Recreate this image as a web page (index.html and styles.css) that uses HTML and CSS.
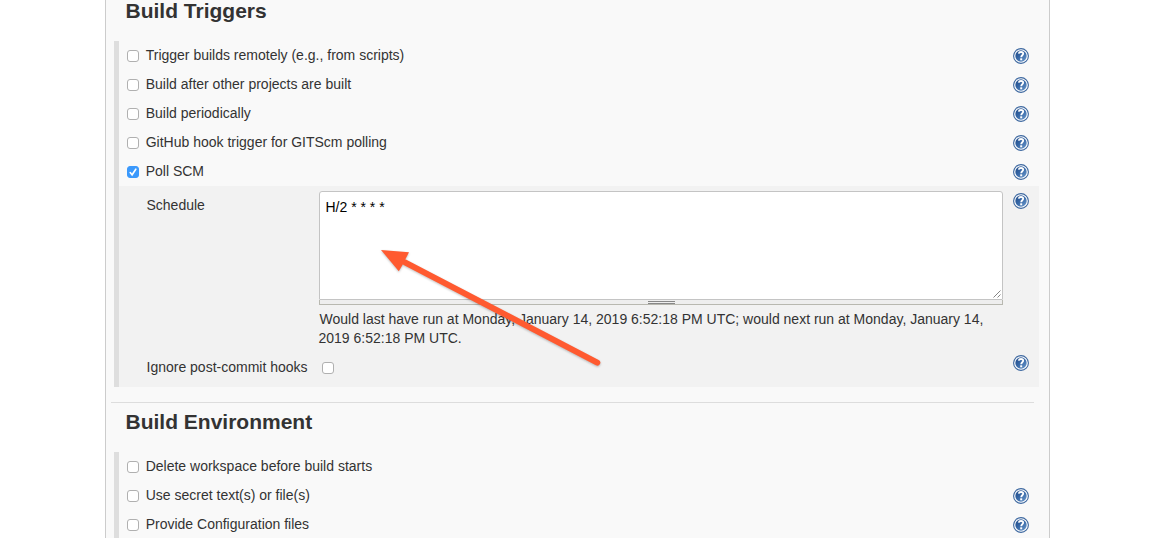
FILE: index.html
```
<!DOCTYPE html>
<html lang="en">
<head>
<meta charset="utf-8">
<title>Build Triggers</title>
<link rel="stylesheet" href="styles.css">
</head>
<body>
<svg width="0" height="0" class="defs">
  <defs>
    <linearGradient id="blue" x1="0" y1="0" x2="1" y2="1">
      <stop offset="0" stop-color="#204a87"/>
      <stop offset=".45" stop-color="#3566a5"/>
      <stop offset="1" stop-color="#6e9bcd"/>
    </linearGradient>
    <symbol id="help" viewBox="0 0 16 16">
      <circle cx="8" cy="8" r="7.4" fill="#fff" stroke="#3c679f" stroke-width="1.1"/>
      <circle cx="8" cy="8" r="5.7" fill="url(#blue)"/>
      <path d="M5.700 5.700C5.900 4.500 6.800 4 8 4c1.400 0 2.200.700 2.200 1.700 0 1.500-2 1.600-2 3.500" fill="none" stroke="#fff" stroke-width="1.800"/>
      <rect x="7.200" y="10.300" width="2" height="2" fill="#fff"/>
    </symbol>
  </defs>
</svg>
<main class="config">
  <h2 class="title">Build Triggers</h2>
  <section class="group">
    <div class="row"><span class="box"></span><label>Trigger builds remotely (e.g., from scripts)</label><svg class="help"><use href="#help"/></svg></div>
    <div class="row"><span class="box"></span><label>Build after other projects are built</label><svg class="help"><use href="#help"/></svg></div>
    <div class="row"><span class="box"></span><label>Build periodically</label><svg class="help"><use href="#help"/></svg></div>
    <div class="row"><span class="box"></span><label>GitHub hook trigger for GITScm polling</label><svg class="help"><use href="#help"/></svg></div>
    <div class="row"><span class="box checked"><svg viewBox="0 0 12 12"><path d="M3.200 6.500 5.100 8.800 8.800 3.200"/></svg></span><label>Poll SCM</label><svg class="help"><use href="#help"/></svg></div>
    <div class="nested">
      <div class="schedule">
        <div class="name">Schedule</div>
        <div class="field">
          <div class="area">H/2 * * * *<svg class="resizer" viewBox="0 0 8 8"><path d="M.5 7.5l7-7M4.500 7.500l3-3"/></svg></div>
          <div class="handle"><span class="grip"></span></div>
          <div class="message"><span class="first">Would last have run at Monday, January 14, 2019 6:52:18 PM UTC; would next run at Monday, January 14,</span><br>2019 6:52:18 PM UTC.</div>
        </div>
        <svg class="help"><use href="#help"/></svg>
      </div>
      <div class="hooks">
        <div class="name">Ignore post-commit hooks</div>
        <span class="box"></span>
        <svg class="help"><use href="#help"/></svg>
      </div>
    </div>
  </section>
  <div class="rule"></div>
  <h2 class="title second">Build Environment</h2>
  <section class="group">
    <div class="row"><span class="box"></span><label>Delete workspace before build starts</label></div>
    <div class="row"><span class="box"></span><label>Use secret text(s) or file(s)</label><svg class="help"><use href="#help"/></svg></div>
    <div class="row"><span class="box"></span><label>Provide Configuration files</label><svg class="help"><use href="#help"/></svg></div>
    <div class="row"></div>
  </section>
</main>
<svg class="arrow" viewBox="0 0 240 140"><path class="shaft" d="M25 22.300 217.300 122.700"/><path class="head" d="M1 10 29 12.300 25.500 19 22.500 25 18.800 31.200z"/></svg>
</body>
</html>
```
FILE: styles.css
```
* { box-sizing: border-box; }
html, body { height: 100%; }
body {
  margin: 0;
  overflow: hidden;
  background: #fff;
  color: #333;
  font: 14px/19px "Liberation Sans", Arial, sans-serif;
}
.defs { position: absolute; }
.config {
  width: 945px;
  height: 538px;
  margin-left: 105px;
  overflow: hidden;
  background: #f9f9f9;
  border: 1px solid #ccc;
  border-width: 0 1px;
}
.title {
  height: 41px;
  margin: 0;
  padding-left: 19.500px;
  font-size: 21px;
  line-height: 22px;
}
.second { height: 49px; padding-top: 8px; }
.group {
  width: 925px;
  margin-left: 8px;
  border-left: 5px solid #dedede;
}
.row {
  display: flex;
  align-items: center;
  height: 29px;
  padding: 0 10px 0 8px;
}
.row .box { margin-top: 1px; }
.row label { margin-left: 6.700px; }
.box {
  flex: none;
  width: 12px;
  height: 12px;
  background: #fff;
  border: 1px solid #b0b0b0;
  border-radius: 3px;
}
.checked { background: #3b99fc; border-color: #3b99fc; }
.checked svg { display: block; width: 12px; height: 12px; margin: -1px; }
.checked path { fill: none; stroke: #fff; stroke-width: 1.6; stroke-linecap: round; }
.help { flex: none; width: 16px; height: 16px; margin: 1px 0 0 auto; }
.nested { height: 201px; padding: 5px 10px 0 27.500px; background: #f2f2f2; }
.schedule { display: flex; align-items: flex-start; }
.schedule .name { width: 172.500px; padding-top: 5px; }
.schedule .help { margin-top: 2px; }
.field { width: 684px; }
.area {
  display: flex;
  justify-content: space-between;
  height: 109px;
  padding: 6px 1px 1px 5.500px;
  background: #fff;
  border: 1px solid #c4c4c4;
  border-radius: 3px 3px 1px 1px;
  color: #000;
}
.resizer { align-self: flex-end; width: 8px; height: 8px; }
.resizer path { fill: none; stroke: #666; stroke-width: .8; }
.handle {
  display: flex;
  justify-content: center;
  height: 5px;
  background: #eee;
  border: 1px solid #b8b8b0;
  border-top: 0;
}
.grip { width: 27px; height: 3px; margin-top: 1px; border: 1px solid #888; border-width: 1px 0; }
.message { margin-top: 5px; margin-left: -.5px; white-space: nowrap; }
.first { margin-left: 1px; }
.hooks { display: flex; align-items: flex-start; margin-top: 10px; }
.hooks .name { width: 175.500px; }
.hooks .box { margin-top: 4px; }
.hooks .help { margin-top: -3px; }
.rule { width: 923px; height: 1px; margin: 15px 0 0 5px; background: #ddd; }
.arrow {
  position: absolute;
  left: 380px;
  top: 240px;
  width: 240px;
  height: 140px;
  filter: drop-shadow(0 1px 1px rgba(0, 0, 0, .25));
}
.shaft { fill: none; stroke: #ff5a30; stroke-width: 6; stroke-linecap: round; }
.head { fill: #ff5a30; }
```
